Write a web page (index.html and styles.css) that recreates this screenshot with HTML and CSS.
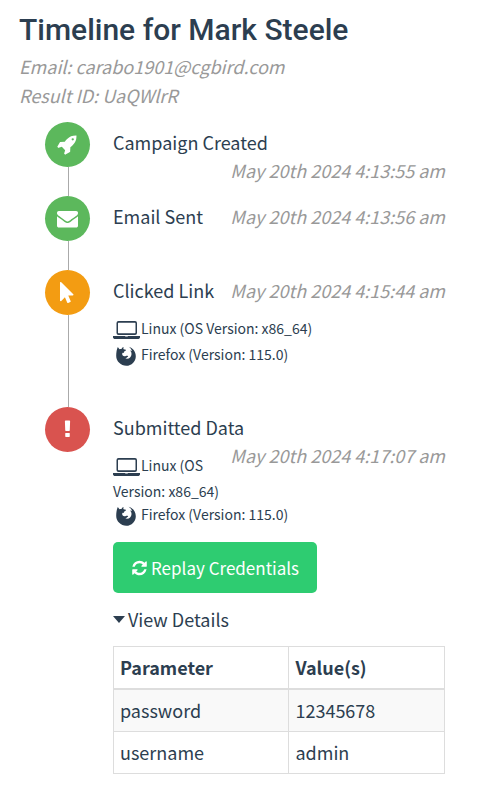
FILE: index.html
```html
<!DOCTYPE html>
<html lang="en">
<head>
<meta charset="utf-8">
<meta name="viewport" content="width=device-width, initial-scale=1">
<title>Timeline for Mark Steele</title>
<link rel="stylesheet" href="styles.css">
</head>
<body>
<svg class="sprite" aria-hidden="true">
  <symbol id="laptop" viewBox="0 0 28 24">
    <path fill-rule="evenodd" d="M5.500 2h16.500a2 2 0 0 1 2 2v10a2 2 0 0 1-2 2H5.500a2 2 0 0 1-2-2V4a2 2 0 0 1 2-2zm0 1.800a.5.5 0 0 0-.5.5v9.400c0 .3.200.5.500.5h16.500c.3 0 .5-.2.500-.5V4.300a.5.5 0 0 0-.5-.5zM0 17h27v1.600c0 .8-1 1.500-2.200 1.500H2.200C1 20.100 0 19.400 0 18.600zm12.200.6v.5h2.600v-.5z"/>
  </symbol>
  <symbol id="firefox" viewBox="0 0 28 24">
    <path d="M4.800 2l1.700 2.300c.6-.3 1.200-.3 1.900-.2.4-1 1.200-1.800 2.200-2.200-.3.900-.4 1.600 0 2.300l2.300.5c.3.700-.5 1.200-1.700 1.800l-.3 1.400c-1.100-.3-1.700.3-1.700 1.100 0 1.300.9 2.200 2.200 2.300 1.300.1 1.900-.9 3.100-.6.8.2.8.8.4 1.100-.7.400-1 1.200-2.700 1.500 3 1.200 6.200-.8 6.300-4.100.1-1.700-.5-2.900-1.500-3.800.9.1 1.500.4 2 .9-.4-2.100-1.600-3.600-3.400-4.600 4.100.9 7.200 4.900 7.200 9.500 0 5.300-4.200 9.600-9.500 9.600S3.200 16.400 3.200 11.100c0-3.600.5-6.700 1.600-9.100z"/>
  </symbol>
</svg>
<main class="page">
  <h1 class="heading">Timeline for Mark Steele</h1>
  <p class="subtitle">Email: carabo1901@cgbird.com<br>Result ID: UaQWlrR</p>

  <ol class="timeline">
    <li class="entry">
      <div class="rail"><span class="marker success"><svg viewBox="0 0 1792 1792" aria-hidden="true"><path d="M1440 448q0-40-28-68t-68-28-68 28-28 68 28 68 68 28 68-28 28-68zm224-288q0 249-75.500 430.500t-253.500 360.500q-81 80-195 176l-20 379q-2 16-16 26l-384 224q-7 4-16 4-12 0-23-9l-64-64q-13-14-8-32l85-276-281-281-276 85q-3 1-9 1-14 0-23-9l-64-64q-17-19-5-39l224-384q10-14 26-16l379-20q96-114 176-195 188-187 358-258t431-71q14 0 24 9.500t10 22.500z"/></svg></span></div>
      <div class="content">Campaign Created <time class="date">May 20th 2024 4:13:55 am</time></div>
    </li>
    <li class="entry">
      <div class="rail"><span class="marker success"><svg viewBox="0 0 1792 1792" aria-hidden="true"><path d="M1792 710v794q0 66-47 113t-113 47h-1472q-66 0-113-47t-47-113v-794q44 49 101 87 362 246 497 345 57 42 92.500 65.500t94.500 48 110 24.500h2q51 0 110-24.500t94.500-48 92.500-65.500q170-123 498-345 57-39 100-87zm0-294q0 79-49 151t-122 123q-376 261-468 325-10 7-42.500 31t-54 38.500-52 32.500-57.500 27-50 9h-2q-23 0-50-9t-57.500-27-52-32.500-54-38.500-42.500-31q-91-64-262-182.500t-205-142.500q-62-42-117-115.500t-55-136.500q0-78 41.500-130t118.500-52h1472q65 0 112.500 47t47.500 113z"/></svg></span></div>
      <div class="content">Email Sent <time class="date">May 20th 2024 4:13:56 am</time></div>
    </li>
    <li class="entry">
      <div class="rail"><span class="marker warning"><svg viewBox="0 0 1792 1792" aria-hidden="true"><path d="M1389 1043q31 30 14 69-17 40-59 40h-382l201 476q10 25 0 49t-34 35l-177 75q-25 10-49 0t-35-34l-191-452-312 312q-19 19-45 19-12 0-24-5-40-17-40-59v-1504q0-42 40-59 12-5 24-5 27 0 45 19z"/></svg></span></div>
      <div class="content">Clicked Link <time class="date">May 20th 2024 4:15:44 am</time>
        <div class="device">
          <div><svg class="device-icon" aria-hidden="true"><use href="#laptop"/></svg>Linux (OS Version: x86_64)</div>
          <div><svg class="device-icon" aria-hidden="true"><use href="#firefox"/></svg>Firefox (Version: 115.0)</div>
        </div>
      </div>
    </li>
    <li class="entry">
      <div class="rail"><span class="marker danger"><svg viewBox="0 0 1792 1792" aria-hidden="true"><path d="M1088 1248v224q0 26-19 45t-45 19h-256q-26 0-45-19t-19-45v-224q0-26 19-45t45-19h256q26 0 45 19t19 45zm30-1056l-28 768q-1 26-20.500 45t-45.500 19h-256q-26 0-45.500-19t-20.500-45l-28-768q-1-26 17.500-45t44.500-19h320q26 0 44.500 19t17.500 45z"/></svg></span></div>
      <div class="content">Submitted Data <time class="date">May 20th 2024 4:17:07 am</time>
        <div class="device">
          <div><svg class="device-icon" aria-hidden="true"><use href="#laptop"/></svg>Linux (OS Version: x86_64)</div>
          <div><svg class="device-icon" aria-hidden="true"><use href="#firefox"/></svg>Firefox (Version: 115.0)</div>
        </div>
        <button type="button" class="replay"><svg viewBox="0 0 1792 1792" aria-hidden="true"><path d="M1639 1056q0 5-1 7-64 268-268 434.500t-478 166.500q-146 0-282.500-55t-243.500-157l-129 129q-19 19-45 19t-45-19-19-45v-448q0-26 19-45t45-19h448q26 0 45 19t19 45-19 45l-137 137q71 66 161 102t187 36q134 0 250-65t186-179q11-17 53-117 8-23 30-23h192q13 0 22.500 9.500t9.500 22.500zm25-800v448q0 26-19 45t-45 19h-448q-26 0-45-19t-19-45 19-45l138-138q-148-137-349-137-134 0-250 65t-186 179q-11 17-53 117-8 23-30 23h-199q-13 0-22.500-9.500t-9.500-22.500v-7q65-268 270-434.500t480-166.500q146 0 284 55.500t245 156.500l130-129q19-19 45-19t45 19 19 45z"/></svg>Replay Credentials</button>
        <details open>
          <summary>View Details</summary>
          <table class="params">
            <thead><tr><th scope="col">Parameter</th><th scope="col">Value(s)</th></tr></thead>
            <tbody>
              <tr><td>password</td><td>12345678</td></tr>
              <tr><td>username</td><td>admin</td></tr>
            </tbody>
          </table>
        </details>
      </div>
    </li>
  </ol>
</main>
</body>
</html>
```
FILE: styles.css
```css
* { box-sizing: border-box; }

body {
  margin: 0;
  background: #fff;
  color: #2c3e50;
  font-family: "Source Sans Pro", "Noto Sans CJK SC", sans-serif;
  font-size: 18px;
  line-height: 28px;
}

.sprite { display: none; }

.page { padding: 13px 59px 16px 19px; }

.heading {
  margin: 0;
  font-family: Roboto, sans-serif;
  font-size: 30px;
  font-weight: 500;
  line-height: 34px;
}

.subtitle {
  margin: 5px 0 0;
  color: #999;
  font-style: italic;
  line-height: 29px;
}

.timeline {
  list-style: none;
  margin: 12px 0 0;
  padding: 0 0 0 26px;
}

.entry { display: flex; gap: 23px; }

.rail {
  display: flex;
  flex-direction: column;
  align-items: center;
  width: 45px;
  flex: none;
}

.entry:not(:last-child) .rail::after {
  content: "";
  flex: 1;
  width: 1px;
  margin-left: 2px;
  background: #aaa;
}

.marker {
  display: flex;
  align-items: center;
  justify-content: center;
  width: 45px;
  height: 45px;
  border-radius: 50%;
}

.marker svg { width: 21px; height: 21px; fill: #fff; }
.success { background: #5cb85c; }
.warning { background: #f39c12; }
.danger { background: #d9534f; }

.content { flex: 1; min-width: 0; min-height: 74px; padding-top: 6px; }

.date { float: right; color: #999; font-style: italic; }

.device {
  margin: 13px 0 38px;
  font-size: 14px;
  line-height: 23px;
}

.device-icon {
  width: 28px;
  height: 24px;
  vertical-align: -9px;
  fill: #2c3e50;
}

.entry:last-child .device { margin-bottom: 13px; }

.replay {
  display: flex;
  align-items: center;
  gap: 3px;
  height: 51px;
  padding: 0 18px;
  border: 0;
  border-radius: 5px;
  background: #2ecc71;
  color: #fff;
  font: inherit;
  font-size: 17px;
}

.replay svg { width: 17px; height: 18px; fill: #fff; }

details { margin-top: 12px; }

summary {
  display: flex;
  align-items: center;
  gap: 3px;
  list-style: none;
  cursor: pointer;
}

summary::before {
  content: "";
  border: 6px solid transparent;
  border-top-width: 7px;
  border-top-color: #2c3e50;
  border-bottom: 0;
}

.params {
  width: 100%;
  margin-top: 13px;
  border-collapse: collapse;
}

.params th,
.params td {
  padding: 6px 6px 7px;
  border: 1px solid #ddd;
  text-align: left;
}

.params th { border-bottom-width: 2px; }
.params th:first-child { width: 53%; }
.params tbody tr:nth-child(odd) { background: #f9f9f9; }
```
